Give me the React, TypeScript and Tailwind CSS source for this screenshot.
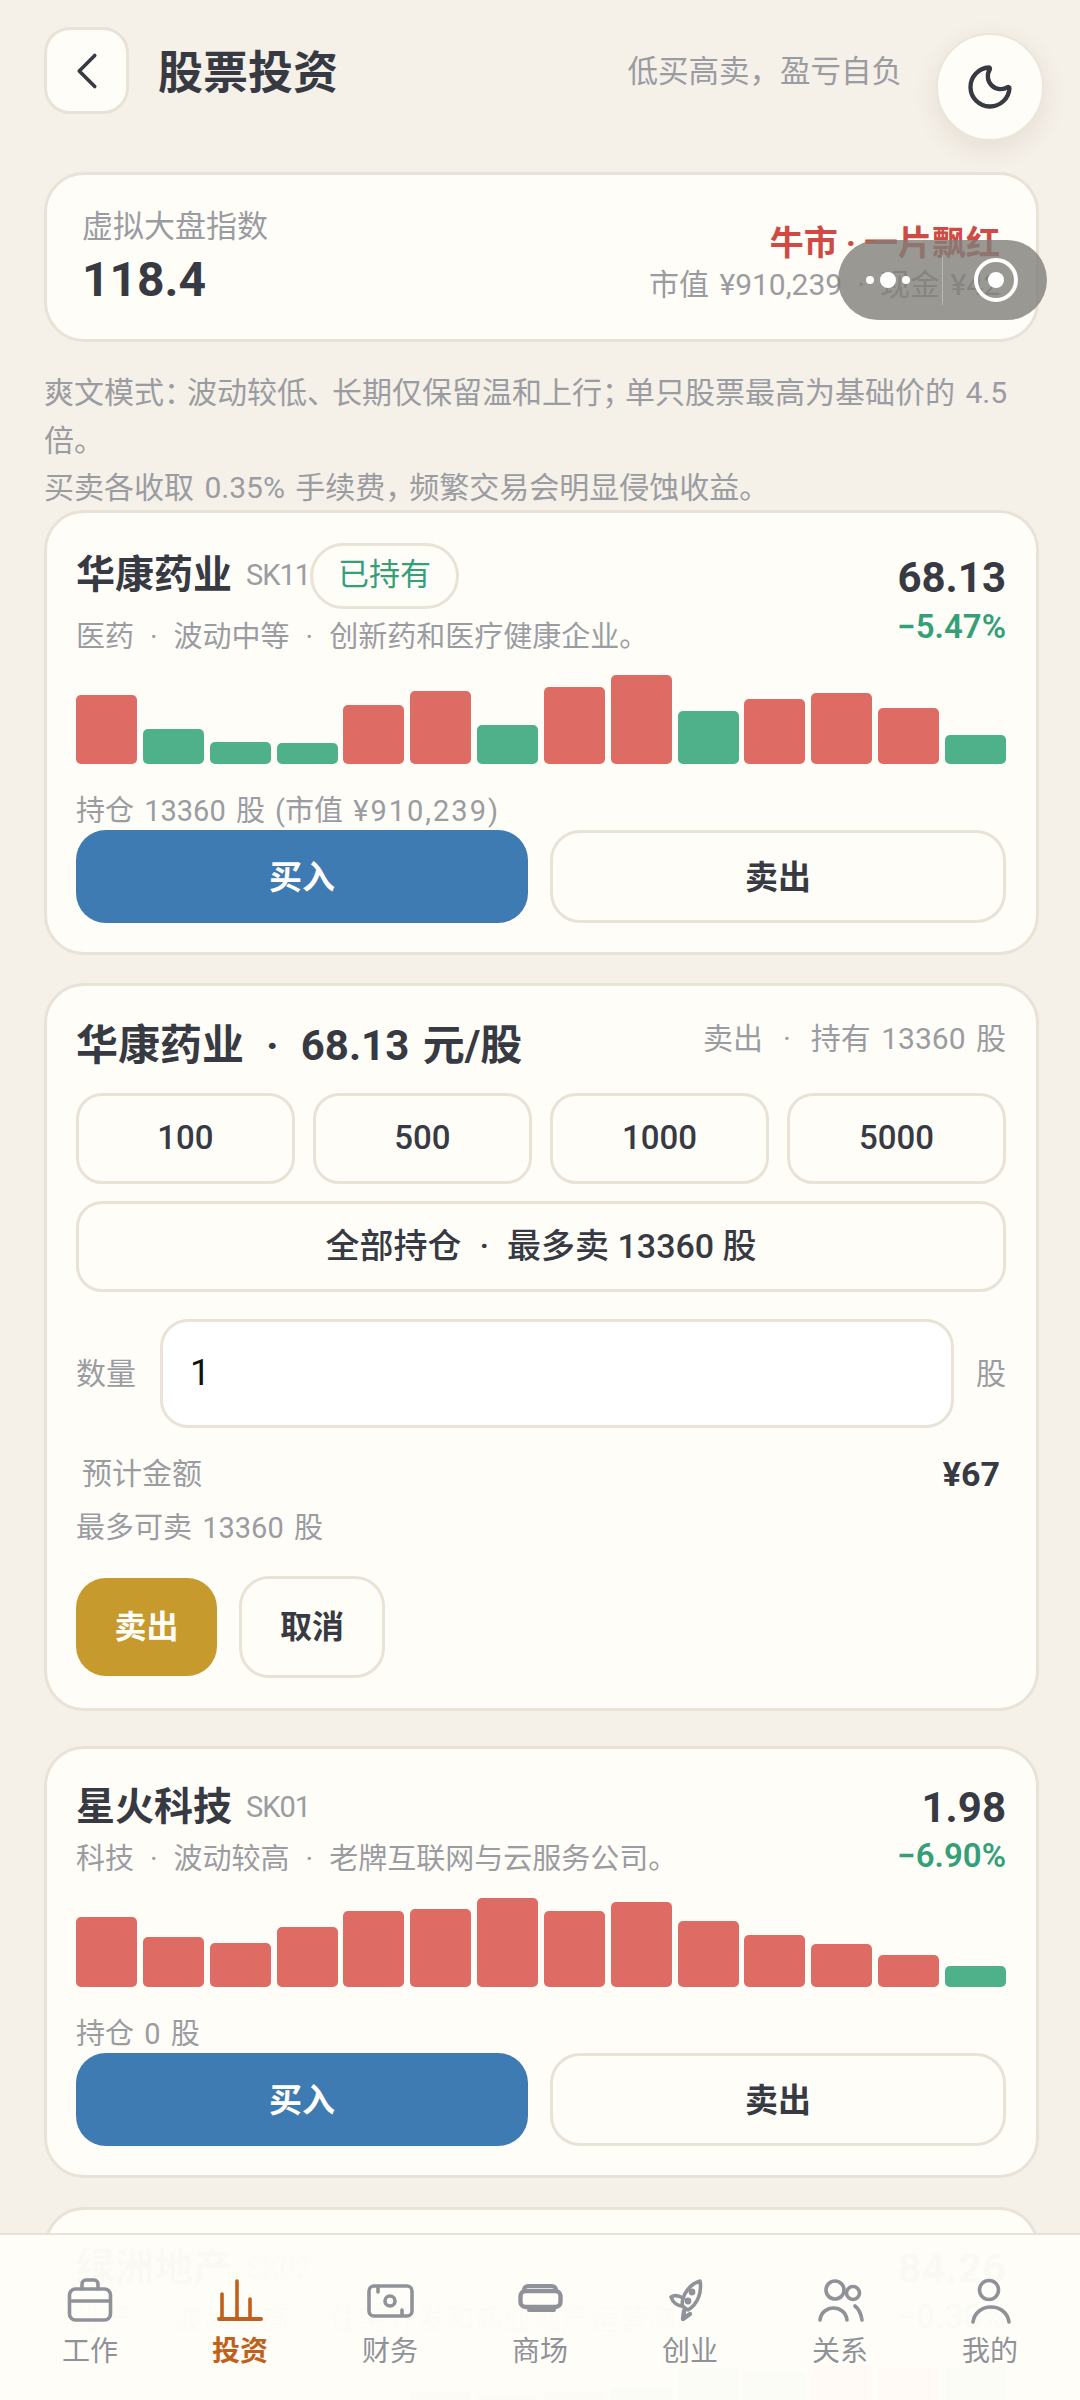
import React from 'react';
import { ChevronLeft, Moon } from 'lucide-react';

type Bar = { h: number; up: boolean };

const toBars = (heights: number[], downIdx: number[]): Bar[] =>
  heights.map((h, i) => ({ h, up: !downIdx.includes(i) }));

const stocks = {
  sk11: toBars([69, 35, 22, 21, 59, 73, 39, 77, 89, 53, 65, 71, 56, 29], [1, 2, 3, 6, 9, 13]),
  sk01: toBars([70, 50, 44, 60, 76, 78, 89, 76, 85, 66, 52, 43, 32, 21], [13]),
  sk02: toBars([40, 35, 30, 30, 45, 56, 53, 56, 61, 80, 76, 83, 81, 81], [0, 1, 2, 3, 4, 5, 6, 7, 8, 9, 10, 13]),
};

const Sep = () => <span className="mx-[16px]">·</span>;

const Bars: React.FC<{ data: Bar[] }> = ({ data }) => (
  <div className="flex h-[90px] items-end justify-between">
    {data.map((b, i) => (
      <div
        key={i}
        className={`w-[61px] rounded-[5px] ${b.up ? 'bg-[#de6b64]' : 'bg-[#4fb18a]'}`}
        style={{ height: b.h }}
      />
    ))}
  </div>
);

const TradeButtons = () => (
  <div className="flex gap-[22px]">
    <button className="h-[93px] w-[452px] rounded-[30px] bg-[#3f7bb3] pt-[3px] text-[33px] font-bold text-[#fffefa]">买入</button>
    <button className="h-[93px] flex-1 rounded-[30px] border-[3px] border-[#e9e3d7] pt-[3px] text-[33px] font-bold text-[#373a42]">卖出</button>
  </div>
);

const StockCard: React.FC<{
  name: string;
  code: string;
  price: string;
  pct: string;
  desc: React.ReactNode;
  hold: React.ReactNode;
  bars: Bar[];
  held?: boolean;
}> = ({ name, code, price, pct, desc, hold, bars, held }) => (
  <div className="ml-[44px] mr-[41px] rounded-[40px] border-[3px] border-[#e9e3d7] bg-[#fffdf8] pb-[29px] pl-[29px] pr-[30px] pt-[30px]">
    <div className="flex justify-between">
      <div>
        <div className={`flex items-center ${held ? 'h-[66px]' : 'h-[52px] pt-[6px]'}`}>
          <span className="text-[39px] font-bold leading-none text-[#373a42]">{name}</span>
          <span className="ml-[14px] text-[29px] leading-none tracking-[-1px] text-[#9a9ca2]">{code}</span>
          {held && (
            <span className="flex h-[66px] w-[149px] items-center justify-center rounded-full border-[3px] border-[#e9e3d7] text-[31px] text-[#35a078]">已持有</span>
          )}
        </div>
        <div className="mt-[6px] text-[29px] leading-[44px] text-[#9a9ca2]">{desc}</div>
      </div>
      <div className="flex flex-col items-end">
        <div className={`flex items-center text-[42px] font-bold leading-none text-[#373a42] ${held ? 'h-[66px] pt-[4px]' : 'h-[52px] pt-[6px]'}`}>{price}</div>
        <div className={`text-[33px] font-semibold leading-[40px] text-[#35a078] ${held ? 'mt-[-2px]' : 'mt-[5px]'}`}>{pct}</div>
      </div>
    </div>
    <div className={held ? 'mt-[15px]' : 'mt-[16px]'}>
      <Bars data={bars} />
    </div>
    <div className="mt-[28px] text-[29px] leading-[38px] text-[#9a9ca2]">{hold}</div>
    <TradeButtons />
  </div>
);

const NavIcon: React.FC<{ children: React.ReactNode; color?: string }> = ({ children, color = '#8f9299' }) => (
  <svg width="48" height="48" viewBox="0 0 48 48" fill="none" stroke={color} strokeWidth="3.6" strokeLinecap="round" strokeLinejoin="round">
    {children}
  </svg>
);

const navItems: { label: string; active?: boolean; icon: React.ReactNode }[] = [
  {
    label: '工作',
    icon: (
      <NavIcon>
        <rect x="3.5" y="13" width="41" height="31" rx="6" />
        <path d="M16 13V8a4 4 0 0 1 4-4h8a4 4 0 0 1 4 4v5" />
        <path d="M4 25h40" />
      </NavIcon>
    ),
  },
  {
    label: '投资',
    active: true,
    icon: (
      <NavIcon color="#c1601a">
        <path d="M3 43h42" strokeWidth="4" />
        <path d="M21 5v38M6 18v25M34 23v20" />
      </NavIcon>
    ),
  },
  {
    label: '财务',
    icon: (
      <NavIcon>
        <rect x="3" y="10" width="43" height="30" rx="5" />
        <circle cx="24" cy="25" r="5" />
        <path d="M12 11v5M36 39v-5" />
      </NavIcon>
    ),
  },
  {
    label: '商场',
    icon: (
      <NavIcon>
        <path d="M8 14a4 4 0 0 1 4-4h24a4 4 0 0 1 4 4" strokeWidth="4" />
        <rect x="4.5" y="15" width="40" height="16" rx="5" strokeWidth="4.4" />
        <path d="M13 34h25" strokeWidth="4" />
      </NavIcon>
    ),
  },
  {
    label: '创业',
    icon: (
      <NavIcon>
        <path d="M34 5C24 8 16 18 16 30l6 4c10-6 14-18 12-29Z" />
        <path d="M17 22c-5-3-9-3-12-1 2 6 7 9 12 9" />
        <path d="m18 35-1 8 7-5" strokeWidth="4.4" />
        <circle cx="26" cy="16" r="1.6" />
        <circle cx="22" cy="25" r="1.6" />
      </NavIcon>
    ),
  },
  {
    label: '关系',
    icon: (
      <NavIcon>
        <circle cx="19" cy="14" r="9" />
        <circle cx="37" cy="17" r="6.5" />
        <path d="M4 44c2-16 25-16 27 0" />
        <path d="M39 30c4 3 6 8 7 14" />
      </NavIcon>
    ),
  },
  {
    label: '我的',
    icon: (
      <NavIcon>
        <circle cx="23" cy="14" r="9.5" />
        <path d="M7 46c3-20 33-20 36 0" />
      </NavIcon>
    ),
  },
];

const qtyOptions = ['100', '500', '1000', '5000'];

export default function App() {
  return (
    <div className="relative h-[2400px] w-[1080px] overflow-hidden bg-[#f5f0e8] font-['Roboto','Noto_Sans_CJK_SC',sans-serif] [word-spacing:3px]">
      {/* header */}
      <div className="flex h-[172px] items-start pl-[44px] pr-[36px] pt-[27px]">
        <button className="flex h-[87px] w-[85px] items-center justify-center rounded-[26px] border-[3px] border-[#e9e3d7] bg-[#fffdf8] text-[#373a42]">
          <ChevronLeft size={62} strokeWidth={1.4} />
        </button>
        <h1 className="ml-[29px] mt-[21px] text-[45px] font-bold leading-[52px] text-[#373a42]">股票投资</h1>
        <span className="ml-auto mr-[34px] mt-[23px] text-[30.5px] leading-[44px] text-[#9a9ca2]">低买高卖，盈亏自负</span>
        <button className="mt-[6px] flex h-[108px] w-[108px] items-center justify-center rounded-full border-[2px] border-[#ece6da] bg-[#fffdf8] text-[#373a42] shadow-[0_8px_24px_rgba(120,100,70,0.12)]">
          <Moon size={52} strokeWidth={2} />
        </button>
      </div>

      {/* market index */}
      <div className="ml-[44px] mr-[41px] flex h-[170px] items-center justify-between rounded-[40px] border-[3px] border-[#e9e3d7] bg-[#fffdf8] pl-[35px] pr-[36px]">
        <div>
          <div className="text-[31px] leading-[46px] text-[#9a9ca2]">虚拟大盘指数</div>
          <div className="text-[48px] font-bold leading-[60px] text-[#373a42]">118.4</div>
        </div>
        <div className="mt-[12px] text-right">
          <div className="text-[34px] font-bold leading-[44px] text-[#cf4a44]">牛市<span className="mx-[8px]">·</span>一片飘红</div>
          <div className="text-[30px] leading-[40px] text-[#9a9ca2]">市值 ¥910,239<span className="mx-[15px]">·</span>现金 ¥42</div>
        </div>
      </div>

      <p className="ml-[44px] mr-[41px] mt-[27px] text-[30px] leading-[47.5px] text-[#9a9ca2]">
        爽文模式<span className="tracking-[-7px]">：</span>波动较低<span className="tracking-[-5px]">、</span>长期仅保留温和上行<span className="tracking-[-7px]">；</span>单只股票最高为基础价的 4.5 倍。
        <br />
        买卖各收取 0.35% 手续费<span className="tracking-[-6px]">，</span>频繁交易会明显侵蚀收益。
      </p>

      <div className="mt-[-2px]">
        <StockCard
          name="华康药业"
          code="SK11"
          price="68.13"
          pct="−5.47%"
          desc={<>医药<Sep />波动中等<Sep />创新药和医疗健康企业。</>}
          hold={<>持仓 13360 股 (市值 <span className="tracking-[2px]">¥910,239)</span></>}
          bars={stocks.sk11}
          held
        />
      </div>

      {/* sell panel */}
      <div className="ml-[44px] mr-[41px] mt-[28px] rounded-[40px] border-[3px] border-[#e9e3d7] bg-[#fffdf8] pb-[30px] pl-[29px] pr-[30px] pt-[30px]">
        <div className="flex h-[60px] items-start justify-between">
          <span className="text-[42px] font-bold leading-[60px] text-[#373a42]">华康药业<span className="mx-[22px]">·</span>68.13 元/股</span>
          <span className="text-[30px] leading-[46px] text-[#9a9ca2]">卖出<span className="mx-[20px]">·</span>持有 13360 股</span>
        </div>
        <div className="mt-[17px] grid grid-cols-4 gap-[18px]">
          {qtyOptions.map((q) => (
            <button key={q} className="h-[91px] rounded-[26px] border-[3px] border-[#e9e3d7] text-[33px] font-medium text-[#373a42]">{q}</button>
          ))}
        </div>
        <button className="mt-[17px] h-[91px] w-full rounded-[26px] border-[3px] border-[#e9e3d7] text-[34px] font-medium text-[#373a42]">全部持仓<span className="mx-[18px]">·</span>最多卖 13360 股</button>
        <div className="mt-[27px] flex items-center">
          <span className="w-[84px] text-[30px] text-[#9a9ca2]">数量</span>
          <div className="flex h-[109px] flex-1 items-center rounded-[28px] border-[3px] border-[#e9e3d7] bg-white pl-[27px] text-[36px] text-[#111]">1</div>
          <span className="ml-[22px] text-[30px] text-[#9a9ca2]">股</span>
        </div>
        <div className="mt-[24px] flex items-center justify-between px-[6px]">
          <span className="text-[30px] leading-[44px] text-[#9a9ca2]">预计金额</span>
          <span className="text-[34px] font-bold leading-[44px] text-[#373a42]">¥67</span>
        </div>
        <div className="mt-[10px] text-[29px] leading-[44px] text-[#9a9ca2]">最多可卖 13360 股</div>
        <div className="mt-[26px] flex items-center gap-[22px]">
          <button className="h-[98px] w-[141px] rounded-[30px] bg-[#c79a2e] text-[32px] font-bold text-[#fffefa]">卖出</button>
          <button className="h-[102px] w-[146px] rounded-[30px] border-[3px] border-[#e9e3d7] text-[32px] font-bold text-[#373a42]">取消</button>
        </div>
      </div>

      <div className="mt-[35px]">
        <StockCard
          name="星火科技"
          code="SK01"
          price="1.98"
          pct="−6.90%"
          desc={<>科技<Sep />波动较高<Sep />老牌互联网与云服务公司。</>}
          hold="持仓 0 股"
          bars={stocks.sk01}
        />
      </div>

      <div className="mt-[29px]">
        <StockCard
          name="绿洲地产"
          code="SK02"
          price="84.26"
          pct="−0.38%"
          desc={<>地产<Sep />波动较高<Sep />住宅开发和商业地产运营商。</>}
          hold="持仓 0 股"
          bars={stocks.sk02}
        />
      </div>

      <nav className="absolute inset-x-0 bottom-0 grid h-[167px] grid-cols-7 border-t-[2px] border-[#e8e2d6] bg-[#fffdf8]/[0.98] px-[15px] pt-[41px]">
        {navItems.map((item) => (
          <div key={item.label} className="flex flex-col items-center">
            {item.icon}
            <span className={`mt-[8px] text-[28px] leading-[40px] ${item.active ? 'font-bold text-[#c1601a]' : 'text-[#8f9299]'}`}>{item.label}</span>
          </div>
        ))}
      </nav>

      {/* floating system capsule over the page */}
      <div className="absolute left-[838px] top-[240px] flex h-[80px] w-[209px] items-center rounded-full bg-[#7f7e79]/80">
        <div className="flex w-[104px] items-center gap-[6px] pl-[28px]">
          <span className="h-[8px] w-[8px] rounded-full bg-white" />
          <span className="h-[16px] w-[16px] rounded-full bg-white" />
          <span className="h-[8px] w-[8px] rounded-full bg-white" />
        </div>
        <div className="h-[50px] w-px bg-white/30" />
        <div className="ml-[31px] flex h-[44px] w-[44px] items-center justify-center rounded-full border-[4px] border-white">
          <span className="h-[16px] w-[16px] rounded-full bg-white" />
        </div>
      </div>
    </div>
  );
}
